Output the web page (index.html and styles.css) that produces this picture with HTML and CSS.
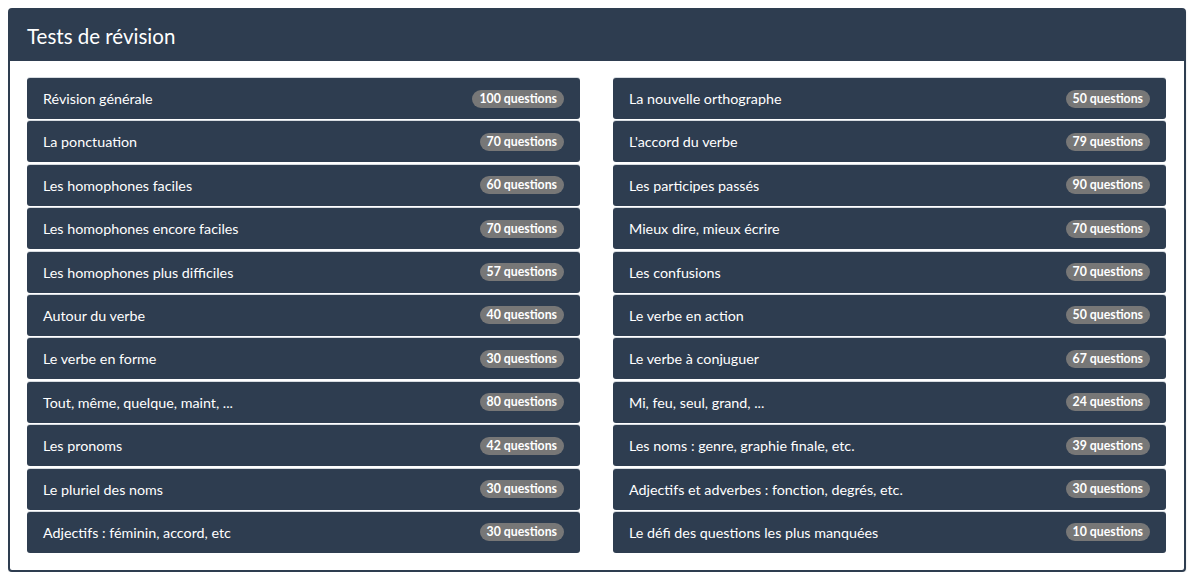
FILE: index.html
```html
<!DOCTYPE html>
<html lang="fr">
<head>
  <meta charset="UTF-8">
  <title>Tests de révision</title>
  <link rel="stylesheet" href="styles.css">
</head>
<body>
  <div class="panel">
    <div class="panel-heading">
      <h3>Tests de révision</h3>
    </div>
    <div class="panel-body">
      <div class="test-list">
        <a class="test-item" href="#">Révision générale <span class="badge">100 questions</span></a>
        <a class="test-item" href="#">La ponctuation <span class="badge">70 questions</span></a>
        <a class="test-item" href="#">Les homophones faciles <span class="badge">60 questions</span></a>
        <a class="test-item" href="#">Les homophones encore faciles <span class="badge">70 questions</span></a>
        <a class="test-item" href="#">Les homophones plus difficiles <span class="badge">57 questions</span></a>
        <a class="test-item" href="#">Autour du verbe <span class="badge">40 questions</span></a>
        <a class="test-item" href="#">Le verbe en forme <span class="badge">30 questions</span></a>
        <a class="test-item" href="#">Tout, même, quelque, maint, ... <span class="badge">80 questions</span></a>
        <a class="test-item" href="#">Les pronoms <span class="badge">42 questions</span></a>
        <a class="test-item" href="#">Le pluriel des noms <span class="badge">30 questions</span></a>
        <a class="test-item" href="#">Adjectifs : féminin, accord, etc <span class="badge">30 questions</span></a>
      </div>
      <div class="test-list">
        <a class="test-item" href="#">La nouvelle orthographe <span class="badge">50 questions</span></a>
        <a class="test-item" href="#">L'accord du verbe <span class="badge">79 questions</span></a>
        <a class="test-item" href="#">Les participes passés <span class="badge">90 questions</span></a>
        <a class="test-item" href="#">Mieux dire, mieux écrire <span class="badge">70 questions</span></a>
        <a class="test-item" href="#">Les confusions <span class="badge">70 questions</span></a>
        <a class="test-item" href="#">Le verbe en action <span class="badge">50 questions</span></a>
        <a class="test-item" href="#">Le verbe à conjuguer <span class="badge">67 questions</span></a>
        <a class="test-item" href="#">Mi, feu, seul, grand, ... <span class="badge">24 questions</span></a>
        <a class="test-item" href="#">Les noms : genre, graphie finale, etc. <span class="badge">39 questions</span></a>
        <a class="test-item" href="#">Adjectifs et adverbes : fonction, degrés, etc. <span class="badge">30 questions</span></a>
        <a class="test-item" href="#">Le défi des questions les plus manquées <span class="badge">10 questions</span></a>
      </div>
    </div>
  </div>
</body>
</html>
```

FILE: styles.css
```css
body {
  font-family: Lato, "Open Sans", sans-serif;
  background: #fff;
  margin: 8px;
}
.panel {
  width: 1178px;
  box-sizing: border-box;
  border: 2px solid #2e3d50;
  border-radius: 4px;
  background: #fff;
  box-shadow: 0 1px 2px rgba(0,0,0,0.15);
}
.panel-heading {
  background-color: #2e3d50;
  height: 51px;
  padding: 0 17px;
  display: flex;
  align-items: center;
}
.panel-heading h3 {
  margin: 0;
  color: #fff;
  font-size: 20.5px;
  font-weight: normal;
}
.panel-body {
  display: flex;
  gap: 33px;
  padding: 17px 18px 17px 17px;
}
.test-list {
  flex: 1;
  display: flex;
  flex-direction: column;
  gap: 2.4px;
}
.test-item {
  height: 41px;
  box-sizing: border-box;
  display: flex;
  align-items: center;
  justify-content: space-between;
  padding: 0 16px;
  background-color: #2e3d50;
  color: #fff;
  font-size: 14.3px;
  text-decoration: none;
  border-radius: 3px;
  box-shadow: 0 -1px 0 #d6dbe0;
}
.badge {
  background-color: #777;
  color: #fff;
  font-size: 12.3px;
  font-weight: bold;
  line-height: 18px;
  padding: 0 7px;
  border-radius: 10px;
}
```
